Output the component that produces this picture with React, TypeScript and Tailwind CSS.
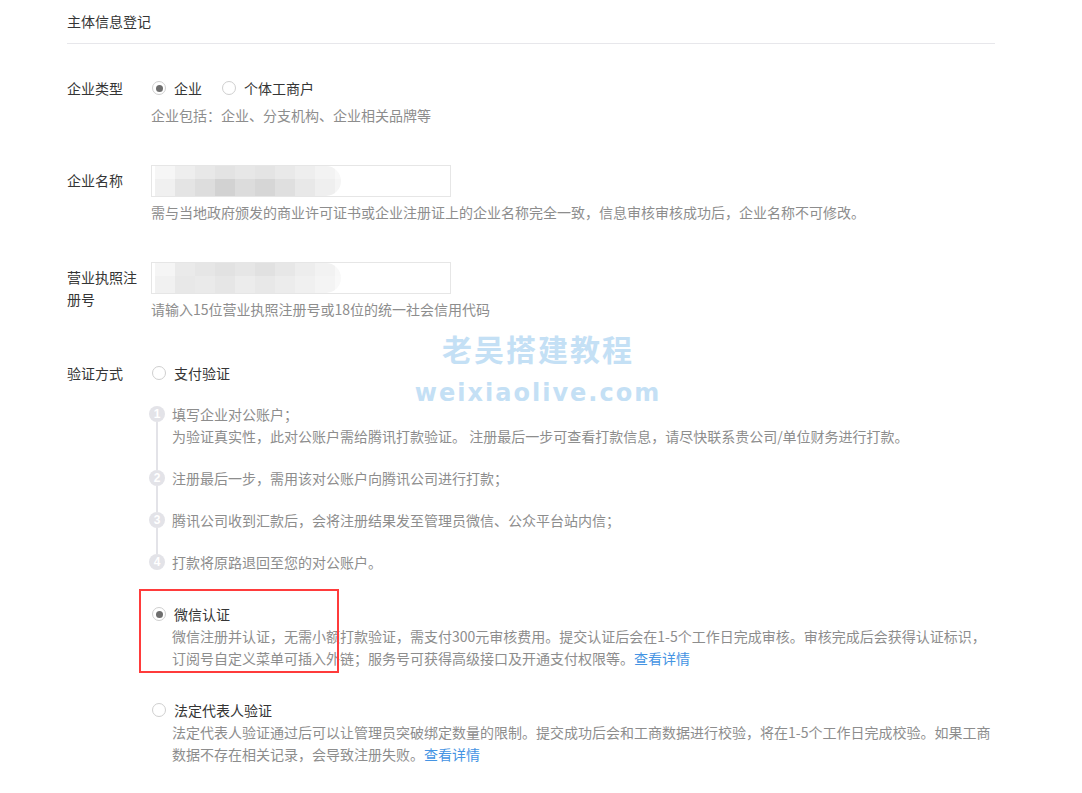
const labelCls = "w-[84px] shrink-0 pr-[10px] leading-[22px]";
const helpCls = "leading-[22px] text-[#8d8d8d]";

function Radio({ checked, label }: { checked?: boolean; label: string }) {
  return (
    <label className="flex items-center leading-[22px]">
      <span className="ml-[1px] flex h-[14px] w-[14px] items-center justify-center rounded-full border border-[#cfcfcf] bg-white">
        {checked && <span className="h-[7px] w-[7px] rounded-full bg-[#6e6e6e]" />}
      </span>
      <span className="ml-[8px]">{label}</span>
    </label>
  );
}

function Mosaic({ top, bottom }: { top: string[]; bottom: string[] }) {
  return (
    <div className="h-[30px] w-[186px] overflow-hidden rounded-r-full blur-[0.5px]">
      <div className="flex h-[13px]">
        {top.map((c, i) => (
          <div key={i} className="h-full w-[20px] shrink-0" style={{ background: c }} />
        ))}
      </div>
      <div className="flex h-[17px]">
        {bottom.map((c, i) => (
          <div key={i} className="h-full w-[20px] shrink-0" style={{ background: c }} />
        ))}
      </div>
    </div>
  );
}

const steps = [
  [
    "填写企业对公账户；",
    "为验证真实性，此对公账户需给腾讯打款验证。 注册最后一步可查看打款信息，请尽快联系贵公司/单位财务进行打款。",
  ],
  ["注册最后一步，需用该对公账户向腾讯公司进行打款；"],
  ["腾讯公司收到汇款后，会将注册结果发至管理员微信、公众平台站内信；"],
  ["打款将原路退回至您的对公账户。"],
];

export default function App() {
  return (
    <div className="min-h-[793px] bg-white font-['Noto_Sans_CJK_SC','Liberation_Sans',sans-serif] text-[14px] text-[#353535]">
      <div className="relative ml-[67px] w-[928px] pt-[10px]">
        <h2 className="border-b border-[#e7e7eb] pb-[11px] text-[14px] font-normal leading-[22px]">
          主体信息登记
        </h2>

        {/* 企业类型 */}
        <div className="mt-[33px] flex">
          <div className={labelCls}>企业类型</div>
          <div>
            <div className="flex items-center gap-[19px]">
              <Radio checked label="企业" />
              <Radio label="个体工商户" />
            </div>
            <p className={`mt-[5px] ${helpCls}`}>企业包括：企业、分支机构、企业相关品牌等</p>
          </div>
        </div>

        {/* 企业名称 */}
        <div className="mt-[39px] flex">
          <div className={`${labelCls} pt-[4px]`}>企业名称</div>
          <div>
            <div className="flex h-[32px] w-[300px] items-center border border-[#e6e6e6] pl-[3px]">
              <Mosaic
                top={["#f6f6f6", "#eeeeee", "#e8e8e8", "#e3e3e3", "#e7e7e7", "#e4e4e4", "#e9e9e9", "#eeeeee", "#f3f3f3", "#f8f8f8"]}
                bottom={["#f0f0f0", "#e4e4e4", "#dddddd", "#d2d2d2", "#dcdcdc", "#d6d6d6", "#dfdfdf", "#e8e8e8", "#efefef", "#f5f5f5"]}
              />
            </div>
            <p className={`mt-[4px] ${helpCls}`}>
              需与当地政府颁发的商业许可证书或企业注册证上的企业名称完全一致，信息审核审核成功后，企业名称不可修改。
            </p>
          </div>
        </div>

        {/* 营业执照注册号 */}
        <div className="mt-[39px] flex">
          <div className={`${labelCls} pt-[4px]`}>营业执照注册号</div>
          <div>
            <div className="flex h-[32px] w-[300px] items-center border border-[#e6e6e6] pl-[3px]">
              <Mosaic
                top={["#f5f5f5", "#eaeaea", "#e6e6e6", "#e2e2e2", "#e6e6e6", "#e1e1e1", "#e7e7e7", "#ededed", "#f2f2f2", "#f8f8f8"]}
                bottom={["#f1f1f1", "#e8e8e8", "#eaeaea", "#e6e6e6", "#ececec", "#e8e8e8", "#ececec", "#f0f0f0", "#f4f4f4", "#f9f9f9"]}
              />
            </div>
            <p className={`mt-[4px] ${helpCls}`}>请输入15位营业执照注册号或18位的统一社会信用代码</p>
          </div>
        </div>

        {/* 验证方式 */}
        <div className="mt-[42px] flex">
          <div className={labelCls}>验证方式</div>
          <div className="flex-1">
            <Radio label="支付验证" />

            <div className="ml-[-2px] mt-[19px]">
              {steps.map((lines, i) => (
                <div key={i} className="flex">
                  <div className="flex w-[16px] shrink-0 flex-col items-center">
                    <div className={`h-[3px] w-[2px] ${i > 0 ? "bg-[#e3e3e8]" : ""}`} />
                    <div className="flex h-[16px] w-[16px] items-center justify-center rounded-full bg-[#e3e3e8] font-['Liberation_Sans',sans-serif] text-[12px] font-bold leading-[16px] text-white">
                      {i + 1}
                    </div>
                    <div className={`w-[2px] flex-1 ${i < steps.length - 1 ? "bg-[#e3e3e8]" : ""}`} />
                  </div>
                  <div className={`ml-[7px] ${helpCls} ${i < steps.length - 1 ? "pb-[20px]" : ""}`}>
                    {lines.map((l, j) => (
                      <p key={j}>{l}</p>
                    ))}
                  </div>
                </div>
              ))}
            </div>

            <div className="mt-[30px]">
              <Radio checked label="微信认证" />
              <p className={`ml-[21px] ${helpCls} whitespace-nowrap`}>
                微信注册并认证，无需小额打款验证，需支付300元审核费用。提交认证后会在1-5个工作日完成审核。审核完成后会获得认证标识，
                <br />
                订阅号自定义菜单可插入外链；服务号可获得高级接口及开通支付权限等。
                <a className="text-[#4594e3]">查看详情</a>
              </p>
            </div>

            <div className="mt-[30px]">
              <Radio label="法定代表人验证" />
              <p className={`ml-[21px] ${helpCls} whitespace-nowrap`}>
                法定代表人验证通过后可以让管理员突破绑定数量的限制。提交成功后会和工商数据进行校验，将在1-5个工作日完成校验。如果工商
                <br />
                数据不存在相关记录，会导致注册失败。
                <a className="text-[#4594e3]">查看详情</a>
              </p>
            </div>
          </div>
        </div>

        {/* annotation box */}
        <div className="pointer-events-none absolute left-[72px] top-[589px] h-[84px] w-[200px] border-2 border-[#ff3b3b]" />

        {/* watermark */}
        <div className="pointer-events-none absolute left-[346px] top-[330px] flex w-[250px] flex-col items-center font-bold text-[#c4e0f5]">
          <span className="font-['Noto_Sans_CJK_SC',sans-serif] text-[30px] leading-[36px] tracking-[2px]">老吴搭建教程</span>
          <span className="mt-[12px] font-['DejaVu_Sans',sans-serif] text-[24px] leading-[30px] tracking-[2px]">weixiaolive.com</span>
        </div>
      </div>
    </div>
  );
}
